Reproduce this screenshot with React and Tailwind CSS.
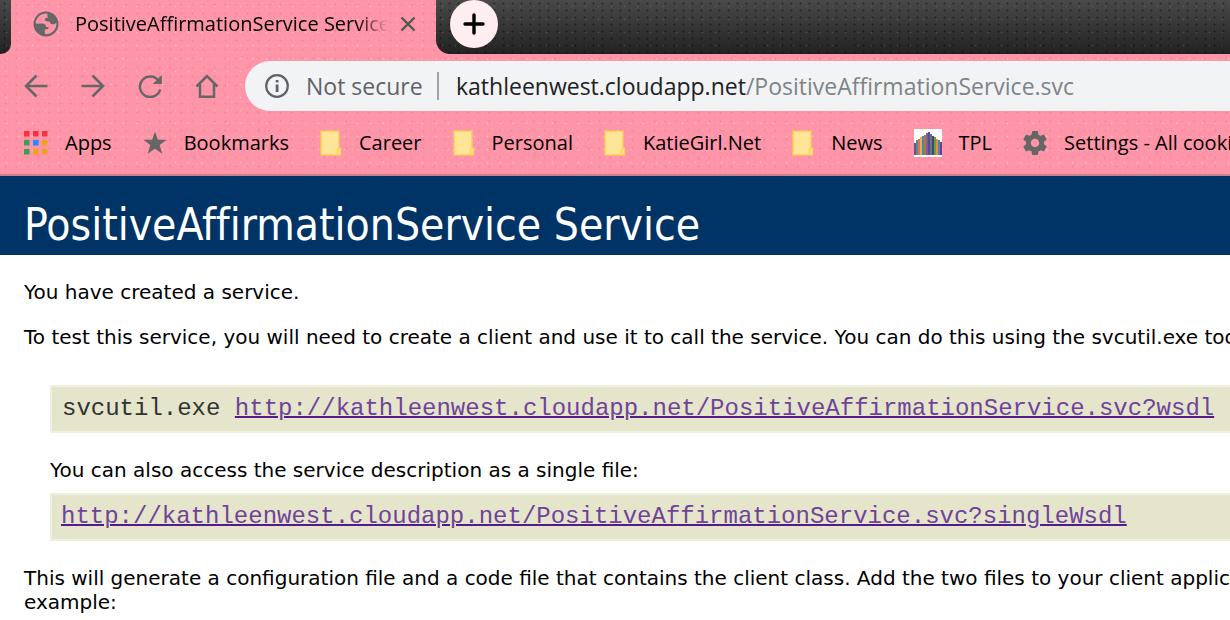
import React from "react";

const pinkTexture =
  "bg-[#fe94a7] bg-[radial-gradient(circle,rgba(255,205,210,0.6)_0.6px,transparent_1.2px),radial-gradient(circle,rgba(225,95,120,0.3)_0.7px,transparent_1.3px),radial-gradient(circle,rgba(255,180,190,0.3)_0.7px,transparent_1.3px)] bg-[size:13px_13px,11px_9px,5px_7px]";
const darkTexture =
  "bg-[#333] bg-[radial-gradient(circle,rgba(150,150,150,0.25)_0.6px,transparent_1.2px),radial-gradient(circle,rgba(0,0,0,0.4)_0.7px,transparent_1.4px),linear-gradient(to_bottom,#494949,#222)] bg-[size:13px_13px,9px_7px,100%_54px]";

function GlobeIcon() {
  return (
    <svg viewBox="0 0 26 26" className="size-[26px] shrink-0" aria-hidden="true">
      <circle cx="13" cy="13" r="12.5" fill="#666" />
      <path
        d="M14.500 2.700C8.500 2 3.300 6.200 2.700 12.200c1.800.9 4 .2 6.300.4 2.800.2 4.200 1.500 4.200 3.500h2.300c.3 1.600-.7 2.500-2.500 2.500h-1.200v4.500c6.600.9 11.600-4.200 11.600-10.300l-.2-1.400c-1 1.600-2.200 2-3.700 1.900-2-.2-2.500-1.500-2.600-2.600-1.400-.3-3.400.1-4.600-.9-.8-1-.6-2.400.6-2.800l2.200-.6c-.9-1.400-.7-2.700-.6-3.700z"
        fill="#fe94a7"
      />
    </svg>
  );
}

function FolderIcon() {
  return (
    <svg viewBox="0 0 22 26" className="h-[26px] w-[22px] shrink-0" aria-hidden="true">
      <path d="M.5.5h19v17h1.700v8H.5z" fill="#fbd65c" />
      <path d="M2 2h16v15.500l-1.500 2V24H2z" fill="#fee598" />
      <path d="M18.500 19.500h1.200v4.500h-1.200z" fill="#fee598" />
    </svg>
  );
}

function AppsIcon() {
  const colors = ["#f5333f", "#f5333f", "#f5333f", "#3c9d58", "#1e8cff", "#f0a11c", "#3c9d58", "#f0a11c", "#f0a11c"];
  return (
    <svg viewBox="0 0 24 24" className="size-6 shrink-0" aria-hidden="true">
      {colors.map((c, i) => (
        <rect key={i} x={(i % 3) * 9} y={Math.floor(i / 3) * 9} width="5.500" height="5.500" fill={c} />
      ))}
    </svg>
  );
}

function StarIcon() {
  return (
    <svg viewBox="0 0 24 24" className="size-6 shrink-0" aria-hidden="true">
      <path d="M12 .5l2.900 8.200h8.800l-7 5.300 2.600 8.800L12 17.700l-7.300 5.100 2.600-8.800L.3 8.700h8.800z" fill="#666" />
    </svg>
  );
}

function LibraryIcon() {
  const bars = [
    [0, 14, "#7b4a92"], [2, 11, "#3a9a8c"], [4, 10, "#ee6a5c"], [6, 8, "#e9b04b"], [8, 7, "#3b8ea8"],
    [10, 6, "#c0703f"], [12, 4, "#7a5f9a"], [14, 3, "#5b4a90"], [16, 5, "#6b7488"], [18, 7, "#384f67"],
    [20, 8, "#5fa050"], [22, 10, "#ef8a42"], [24, 11, "#3f8ab0"], [26, 13, "#7b3a86"],
  ];
  return (
    <svg viewBox="0 0 28 28" className="size-7 shrink-0" aria-hidden="true">
      <rect width="28" height="28" fill="#fff" />
      {bars.map(([x, y, c]) => (
        <rect key={x} x={x} y={y} width="2" height={26 - y} fill={c} />
      ))}
    </svg>
  );
}

function GearIcon() {
  return (
    <svg viewBox="2 2 20 20" className="size-6 shrink-0" aria-hidden="true">
      <path
        d="M19.430 12.980c.04-.32.07-.64.07-.98s-.03-.66-.07-.98l2.110-1.650c.19-.15.24-.42.12-.64l-2-3.460c-.12-.22-.39-.3-.61-.22l-2.490 1c-.52-.4-1.080-.73-1.690-.98l-.38-2.650C14.460 2.180 14.250 2 14 2h-4c-.25 0-.46.18-.49.42l-.38 2.650c-.61.25-1.170.59-1.690.98l-2.490-1c-.23-.09-.49 0-.61.22l-2 3.460c-.13.22-.07.49.12.64l2.110 1.650c-.04.32-.07.65-.07.98s.03.66.07.98l-2.110 1.650c-.19.15-.24.42-.12.64l2 3.460c.12.22.39.3.61.22l2.490-1c.52.4 1.080.73 1.690.98l.38 2.650c.03.24.24.42.49.42h4c.25 0 .46-.18.49-.42l.38-2.650c.61-.25 1.170-.59 1.690-.98l2.490 1c.23.09.49 0 .61-.22l2-3.460c.12-.22.07-.49-.12-.64l-2.110-1.650zM12 15.500c-1.930 0-3.500-1.570-3.500-3.500s1.570-3.500 3.500-3.500 3.500 1.570 3.500 3.500-1.570 3.500-3.500 3.500z"
        fill="#666"
      />
    </svg>
  );
}

function NavButton({ label, children }) {
  return (
    <button type="button" aria-label={label} className="shrink-0">
      <svg viewBox="0 0 24 24" className="size-6" fill="none" stroke="#666" strokeWidth="2.500" aria-hidden="true">
        {children}
      </svg>
    </button>
  );
}

function Bookmark({ icon, label }) {
  return (
    <a href="#" className="flex shrink-0 items-center">
      {icon}
      <span className="pl-[17px]">{label}</span>
    </a>
  );
}

const wsdl = "http://kathleenwest.cloudapp.net/PositiveAffirmationService.svc?wsdl";
const singleWsdl = "http://kathleenwest.cloudapp.net/PositiveAffirmationService.svc?singleWsdl";

export default function App() {
  return (
    <div className="min-h-screen overflow-hidden bg-white whitespace-nowrap text-black">
      <header className={`border-b-2 border-[#cf8090] font-['Open_Sans','Noto_Sans',sans-serif] ${pinkTexture}`}>
        <div className="flex h-[54px]">
          <div className={`w-[11px] shrink-0 rounded-br-[10px] ${darkTexture}`} />
          <div className="flex h-12 w-[425px] shrink-0 items-center pr-5 pl-[22px]">
            <GlobeIcon />
            <span className="ml-4 flex-1 overflow-hidden mask-r-from-90% mask-r-to-100% text-[20px]">
              PositiveAffirmationService Service
            </span>
            <button type="button" aria-label="Close tab" className="ml-3 shrink-0">
              <svg viewBox="0 0 16 16" className="size-4" stroke="#555" strokeWidth="2.400" aria-hidden="true">
                <path d="M1.500 1.500l13 13M14.500 1.500l-13 13" />
              </svg>
            </button>
          </div>
          <div className={`min-w-0 flex-1 rounded-bl-[14px] pl-[14px] ${darkTexture}`}>
            <button
              type="button"
              aria-label="New tab"
              className="flex size-12 items-center justify-center rounded-full bg-[#ffeeef]"
            >
              <svg viewBox="0 0 22 22" className="size-[22px]" stroke="#000" strokeWidth="3.400" strokeLinecap="round" aria-hidden="true">
                <path d="M11 2v18M2 11h18" />
              </svg>
            </button>
          </div>
        </div>

        <div className="flex items-center pt-[7px] pl-6">
          <div className="flex w-[221px] shrink-0 gap-[33px]">
            <NavButton label="Back">
              <path d="M23.500 12H2M12.500 1.500L2 12l10.500 10.500" />
            </NavButton>
            <NavButton label="Forward">
              <path d="M.5 12H22M11.500 1.500L22 12 11.500 22.500" />
            </NavButton>
            <NavButton label="Reload">
              <path d="M20.500 6.500A10.300 10.300 0 1 0 22.200 15.500" />
              <path d="M23.800 1v9h-9z" fill="#666" stroke="none" />
            </NavButton>
            <NavButton label="Home">
              <path d="M1.500 12.500L12 2l10.500 10.500M5 10v12.700h14V10" />
            </NavButton>
          </div>
          <div className="flex h-[50px] min-w-0 flex-1 items-center rounded-l-full bg-[#f1f3f4] pl-5 text-[23px]">
            <svg viewBox="0 0 24 24" className="size-6 shrink-0" aria-hidden="true">
              <circle cx="12" cy="12" r="10.800" fill="none" stroke="#5f6368" strokeWidth="2.200" />
              <path d="M10.700 10.500h2.800v7.500h-2.800zM10.700 6h2.800v2.600h-2.800z" fill="#5f6368" />
            </svg>
            <span className="w-[132px] shrink-0 pl-[17px] text-[#5f6368]">Not secure</span>
            <span className="ml-4 h-7 w-[2px] shrink-0 bg-[#9fa3a6]" />
            <span className="pl-[17px] text-[#202124]">
              kathleenwest.cloudapp.net<span className="text-[#7f8387]">/PositiveAffirmationService.svc</span>
            </span>
          </div>
        </div>

        <nav aria-label="Bookmarks" className="flex h-[63px] items-center gap-[31px] pl-6 text-[20px]">
          <Bookmark icon={<AppsIcon />} label="Apps" />
          <Bookmark icon={<StarIcon />} label="Bookmarks" />
          <Bookmark icon={<FolderIcon />} label="Career" />
          <Bookmark icon={<FolderIcon />} label="Personal" />
          <Bookmark icon={<FolderIcon />} label="KatieGirl.Net" />
          <Bookmark icon={<FolderIcon />} label="News" />
          <Bookmark icon={<LibraryIcon />} label="TPL" />
          <Bookmark icon={<GearIcon />} label="Settings - All cookies" />
        </nav>
      </header>

      <main className="font-['DejaVu_Sans',sans-serif] text-[20px] leading-6">
        <h1 className="bg-[#003366] pt-[25px] pb-[7px] pl-6 font-['DejaVu_Sans_Condensed','Noto_Sans',sans-serif] text-[44px] leading-[47px] text-white [font-variant-ligatures:none]">
          PositiveAffirmationService Service
        </h1>
        <div className="pt-[25px] pl-6">
          <p>You have created a service.</p>
          <p className="mt-[21px]">
            To test this service, you will need to create a client and use it to call the service. You can do this using the svcutil.exe tool
          </p>
          <div className="mt-9 pl-[26px]">
            <pre className="border-2 border-r-0 border-[#f0f0e0] bg-[#e5e5cc] py-[10px] pl-[10px] font-['Liberation_Mono',monospace] text-[24px] text-[#333]">
              svcutil.exe <a href={wsdl} className="text-[#6f4399] underline decoration-[#551a8b] decoration-2">{wsdl}</a>
            </pre>
            <p className="mt-[25px]">You can also access the service description as a single file:</p>
            <pre className="mt-[11px] border-2 border-r-0 border-[#f0f0e0] bg-[#e5e5cc] py-[10px] pl-[9px] font-['Liberation_Mono',monospace] text-[24px]">
              <a href={singleWsdl} className="text-[#6f4399] underline decoration-[#551a8b] decoration-2">{singleWsdl}</a>
            </pre>
          </div>
          <p className="mt-[25px]">
            This will generate a configuration file and a code file that contains the client class. Add the two files to your client application
            <br />
            example:
          </p>
        </div>
      </main>
    </div>
  );
}
